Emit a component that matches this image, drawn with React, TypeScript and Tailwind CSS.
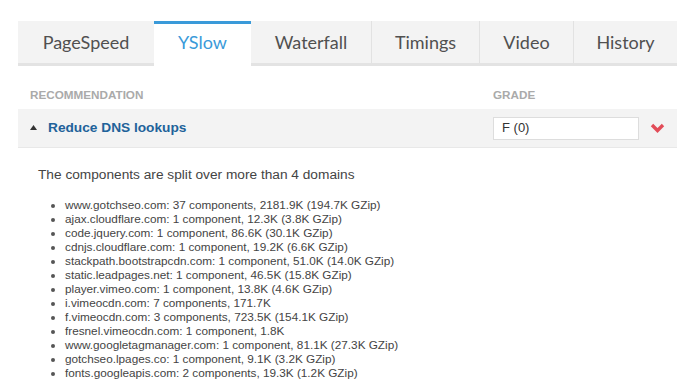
import React from 'react';

const tabs = [
  { label: 'PageSpeed', width: 'w-[136px]' },
  { label: 'YSlow', width: 'w-[97px]' },
  { label: 'Waterfall', width: 'w-[120px]' },
  { label: 'Timings', width: 'w-[108px]' },
  { label: 'Video', width: 'w-[94px]' },
  { label: 'History', width: 'w-[104px]' },
];

const domains = [
  'www.gotchseo.com: 37 components, 2181.9K (194.7K GZip)',
  'ajax.cloudflare.com: 1 component, 12.3K (3.8K GZip)',
  'code.jquery.com: 1 component, 86.6K (30.1K GZip)',
  'cdnjs.cloudflare.com: 1 component, 19.2K (6.6K GZip)',
  'stackpath.bootstrapcdn.com: 1 component, 51.0K (14.0K GZip)',
  'static.leadpages.net: 1 component, 46.5K (15.8K GZip)',
  'player.vimeo.com: 1 component, 13.8K (4.6K GZip)',
  'i.vimeocdn.com: 7 components, 171.7K',
  'f.vimeocdn.com: 3 components, 723.5K (154.1K GZip)',
  'fresnel.vimeocdn.com: 1 component, 1.8K',
  'www.googletagmanager.com: 1 component, 81.1K (27.3K GZip)',
  'gotchseo.lpages.co: 1 component, 9.1K (3.2K GZip)',
  'fonts.googleapis.com: 2 components, 19.3K (1.2K GZip)',
];

const active = 'YSlow';

const App: React.FC = () => {
  return (
    <div className="w-[680px] h-[380px] overflow-hidden bg-white pt-[21px] pl-[18px] pr-[3px] font-['Liberation_Sans',Arial,sans-serif]">
      {/* Tabs */}
      <div className="flex">
        {tabs.map((tab, i) => {
          const isActive = tab.label === active;
          const prevActive = i > 0 && tabs[i - 1].label === active;
          const sep = !isActive && i > 0 && !prevActive;
          return (
            <div key={tab.label} className={`${tab.width} flex flex-col`}>
              <div
                className={`h-[42px] flex items-center justify-center font-['Lato',sans-serif] text-[18px] ${
                  isActive
                    ? 'bg-white text-[#3a9ad9] shadow-[inset_0_3px_0_#3a9ad9]'
                    : 'bg-[#f3f3f3] text-[#505050]'
                } ${sep ? 'border-l border-[#e2e2e2]' : ''}`}
              >
                {tab.label}
              </div>
              <div className={`h-[3px] ${isActive ? 'bg-white' : 'bg-[#e3e3e3]'}`} />
            </div>
          );
        })}
      </div>

      {/* Header */}
      <div className="grid grid-cols-[475px_1fr] mt-[22px] pb-[8px] text-[11.7px] font-bold text-[#aaaaaa] leading-[13px]">
        <div className="pl-3">RECOMMENDATION</div>
        <div>GRADE</div>
      </div>

      {/* Row */}
      <div className="grid grid-cols-[475px_1fr] h-[39px] items-center bg-[#f3f3f3] border-b border-[#e8e8e8]">
        <div className="flex items-center pl-3">
          <svg width="7" height="5" viewBox="0 0 7 5" className="mr-[11px]">
            <path d="M3.5 0 L7 5 L0 5 Z" fill="#333" />
          </svg>
          <span className="text-[13.7px] font-bold text-[#21629a]">Reduce DNS lookups</span>
        </div>
        <div className="flex items-center">
          <div className="w-[146px] h-[23px] bg-white border border-[#dddddd] flex items-center pl-[8px] text-[13px] text-[#333]">
            F (0)
          </div>
          <svg width="15" height="10" viewBox="0 0 15 10" className="ml-[11px]">
            <path d="M2 2 L7.5 7.5 L13 2" fill="none" stroke="#e24c58" strokeWidth="3.4" />
          </svg>
        </div>
      </div>

      {/* Details */}
      <div className="pl-[20px] pt-[17px] text-[#444]">
        <p className="text-[13.7px]">The components are split over more than 4 domains</p>
        <ul className="list-disc pl-[27px] mt-[12px] text-[11.75px] leading-[14px] marker:text-[#555]">
          {domains.map((d) => (
            <li key={d}>{d}</li>
          ))}
        </ul>
      </div>
    </div>
  );
};

export default App;
